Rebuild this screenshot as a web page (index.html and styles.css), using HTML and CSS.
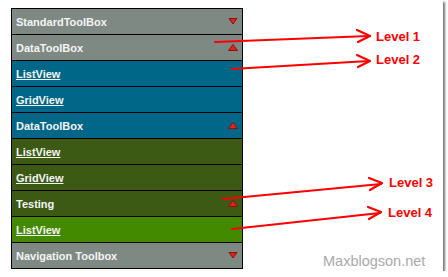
FILE: index.html
```html
<!DOCTYPE html>
<html>
<head>
    <title>Toolbox Levels</title>
    <link rel="stylesheet" href="styles.css">
</head>
<body>
    <div class="frame">
        <div class="toolbox">
            <div class="row level-0">
                <span class="title">StandardToolBox</span>
                <svg class="caret" width="10" height="7" viewBox="0 0 10 7"><polygon points="1,0.5 9,0.5 5,6" /></svg>
            </div>
            <div class="row level-0">
                <span class="title">DataToolBox</span>
                <svg class="caret" width="10" height="7" viewBox="0 0 10 7"><polygon points="0.5,6.5 9.5,6.5 5,0.5" /></svg>
            </div>
            <div class="row level-1"><a href="#">ListView</a></div>
            <div class="row level-1"><a href="#">GridView</a></div>
            <div class="row level-1">
                <span class="title">DataToolBox</span>
                <svg class="caret" width="10" height="7" viewBox="0 0 10 7"><polygon points="0.5,6.5 9.5,6.5 5,0.5" /></svg>
            </div>
            <div class="row level-2"><a href="#">ListView</a></div>
            <div class="row level-2"><a href="#">GridView</a></div>
            <div class="row level-2">
                <span class="title">Testing</span>
                <svg class="caret" width="10" height="7" viewBox="0 0 10 7"><polygon points="0.5,6.5 9.5,6.5 5,0.5" /></svg>
            </div>
            <div class="row level-3"><a href="#">ListView</a></div>
            <div class="row level-0">
                <span class="title">Navigation Toolbox</span>
                <svg class="caret" width="10" height="7" viewBox="0 0 10 7"><polygon points="1,0.5 9,0.5 5,6" /></svg>
            </div>
        </div>

        <!-- callouts drawn over the screenshot -->
        <svg class="callouts" width="448" height="277" viewBox="0 0 448 277">
            <g fill="none" stroke="#f00" stroke-width="2.2" stroke-linecap="round" stroke-linejoin="round">
                <line x1="215" y1="42" x2="369" y2="36" />
                <polyline points="357,30 370,36 358,42" />
                <line x1="232" y1="69" x2="369" y2="61" />
                <polyline points="357,55 370,61 358,67" />
                <line x1="223" y1="199" x2="381" y2="184" />
                <polyline points="369,178 382,183 370,190" />
                <line x1="232" y1="229" x2="380" y2="213" />
                <polyline points="368,207 381,212 369,219" />
            </g>
        </svg>
        <span class="label label-1">Level 1</span>
        <span class="label label-2">Level 2</span>
        <span class="label label-3">Level 3</span>
        <span class="label label-4">Level 4</span>
        <span class="watermark">Maxblogson.net</span>
    </div>
</body>
</html>
```

FILE: styles.css
```css
body {
    margin: 0;
    background: #fff;
    font-family: "Liberation Sans", Arial, sans-serif;
}

.frame {
    position: relative;
    width: 443px;
    height: 271px;
    padding: 8px 0 0 11px;
    box-sizing: border-box;
    background: #fff;
    box-shadow: 2px 2px 2px #777;
}

.toolbox {
    width: 232px;
    border: 1px solid #000;
    box-sizing: border-box;
}

.row {
    display: flex;
    align-items: center;
    justify-content: space-between;
    height: 25px;
    padding: 0 4px 0 4px;
    border-top: 1px solid #000;
    color: #f4f4f4;
    font-size: 11px;
    font-weight: bold;
}

.row:first-child {
    border-top: none;
}

.row a {
    color: #f4f4f4;
    text-decoration: underline;
}

.level-0 {
    background-color: #7f8984;
}

.level-1 {
    background-color: #006789;
}

.level-2 {
    background-color: #3c5a13;
}

.level-3 {
    background-color: #448a00;
}

.caret polygon {
    fill: #e3231b;
    stroke: #8a1010;
    stroke-width: 1;
}

.callouts {
    position: absolute;
    left: 0;
    top: 0;
}

.label {
    position: absolute;
    color: #f00;
    font-size: 13px;
    font-weight: bold;
    line-height: 14px;
}

.label-1 { left: 376px; top: 30px; }
.label-2 { left: 376px; top: 53px; }
.label-3 { left: 389px; top: 176px; }
.label-4 { left: 388px; top: 206px; }

.watermark {
    position: absolute;
    left: 323px;
    top: 252px;
    color: #a9a9a9;
    font-size: 14.5px;
    line-height: 18px;
}
```
